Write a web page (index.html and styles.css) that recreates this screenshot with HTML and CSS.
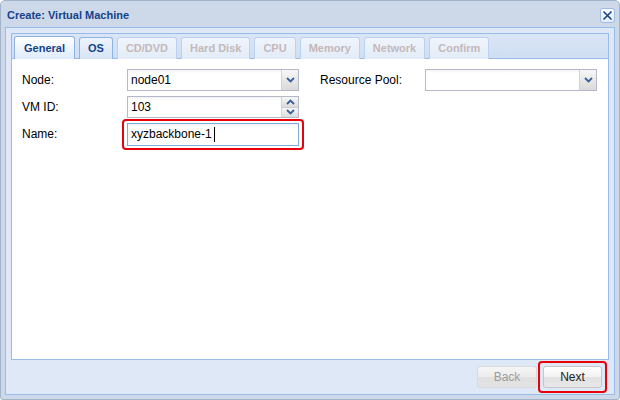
FILE: index.html
```html
<!DOCTYPE html>
<html>
<head>
<meta charset="utf-8">
<link rel="stylesheet" href="styles.css">
</head>
<body>
<div class="window">
  <div class="header">
    <span class="title">Create: Virtual Machine</span>
    <span class="close"><svg width="11" height="11" viewBox="0 0 11 11"><path d="M1.5 1.5 L9.5 9.5 M9.5 1.5 L1.5 9.5" stroke="#15428b" stroke-width="1.6" fill="none"/></svg></span>
  </div>
  <div class="frame">
    <div class="tabpanel">
      <div class="tabstrip">
        <span class="tab active">General</span>
        <span class="tab">OS</span>
        <span class="tab disabled">CD/DVD</span>
        <span class="tab disabled">Hard Disk</span>
        <span class="tab disabled">CPU</span>
        <span class="tab disabled">Memory</span>
        <span class="tab disabled">Network</span>
        <span class="tab disabled">Confirm</span>
      </div>
      <div class="tabbody">
        <div class="column">
          <div class="row">
            <span class="label">Node:</span>
            <div class="field">
              <span class="text">node01</span>
              <span class="trigger"><svg width="9" height="6" viewBox="0 0 9 6"><path d="M1 1 L4.5 4.5 L8 1" stroke="#3a5f9a" stroke-width="1.8" fill="none"/></svg></span>
            </div>
          </div>
          <div class="row">
            <span class="label">VM ID:</span>
            <div class="field">
              <span class="text">103</span>
              <span class="spinner">
                <span class="spin up"><svg width="9" height="6" viewBox="0 0 9 6"><path d="M1 5 L4.5 1.5 L8 5" stroke="#3a5f9a" stroke-width="1.8" fill="none"/></svg></span>
                <span class="spin down"><svg width="9" height="6" viewBox="0 0 9 6"><path d="M1 1 L4.5 4.5 L8 1" stroke="#3a5f9a" stroke-width="1.8" fill="none"/></svg></span>
              </span>
            </div>
          </div>
          <div class="row">
            <span class="label">Name:</span>
            <div class="field focus highlight">
              <span class="text">xyzbackbone-1<span class="caret"></span></span>
            </div>
          </div>
        </div>
        <div class="column">
          <div class="row">
            <span class="label">Resource Pool:</span>
            <div class="field">
              <span class="text"></span>
              <span class="trigger"><svg width="9" height="6" viewBox="0 0 9 6"><path d="M1 1 L4.5 4.5 L8 1" stroke="#3a5f9a" stroke-width="1.8" fill="none"/></svg></span>
            </div>
          </div>
        </div>
      </div>
    </div>
    <div class="footer">
      <span class="btn disabled">Back</span>
      <span class="btn highlight-btn">Next</span>
    </div>
  </div>
</div>
</body>
</html>
```

FILE: styles.css
```css
* { box-sizing: border-box; }
html, body { margin: 0; padding: 0; }
body {
  width: 620px;
  height: 400px;
  background: #ffffff;
  font-family: "Liberation Sans", Arial, sans-serif;
  overflow: hidden;
}
.window {
  width: 620px;
  height: 400px;
  background: #cdd9e8;
  border: 1px solid #a2b4ca;
  border-radius: 5px 5px 3px 3px;
  padding: 0 4px 4px 4px;
  display: flex;
  flex-direction: column;
}
.header {
  height: 26px;
  display: flex;
  align-items: center;
  justify-content: space-between;
  padding: 0 0 0 2px;
}
.title {
  font-weight: bold;
  font-size: 11px;
  color: #15428b;
  margin-top: 1px;
}
.close {
  width: 15px;
  height: 15px;
  border: 1px solid #99bbe8;
  border-radius: 3px;
  background: linear-gradient(#ffffff, #e3ecf8);
  display: flex;
  align-items: center;
  justify-content: center;
  margin-top: 2px;
}
.frame {
  flex: 1;
  background: #dfe8f6;
  border: 1px solid #99bbe8;
  padding: 5px 5px 0 5px;
  display: flex;
  flex-direction: column;
}
.tabpanel {
  height: 327px;
  border: 1px solid #99bbe8;
  display: flex;
  flex-direction: column;
}
.tabstrip {
  height: 25px;
  background: linear-gradient(#dae6f6, #cfdef3);
  border-bottom: 1px solid #99bbe8;
  padding: 2px 0 0 2px;
  display: flex;
  gap: 4px;
  align-items: flex-end;
}
.tab {
  height: 22px;
  margin-bottom: -1px;
  border: 1px solid #8db2e3;
  border-bottom: none;
  border-radius: 3px 3px 0 0;
  background: linear-gradient(#eef4fc, #d7e4f5);
  font-size: 11px;
  font-weight: bold;
  color: #15428b;
  padding: 4px 8px 0 8px;
}
.tab.active {
  background: linear-gradient(#ffffff, #deecfd);
  height: 23px;
  padding: 5px 9px 0 9px;
}
.tab.disabled {
  color: #c4b8ba;
  border-color: #bcd1ee;
  background: linear-gradient(#f0f5fc, #e2ebf7);
}
.tabbody {
  flex: 1;
  background: #ffffff;
  padding: 10px 10px;
  display: flex;
  gap: 21px;
}
.column {
  display: flex;
  flex-direction: column;
  gap: 5px;
}
.row {
  display: flex;
  align-items: center;
  height: 22px;
}
.label {
  width: 105px;
  font-size: 12px;
  color: #000;
}
.field {
  width: 172px;
  height: 22px;
  border: 1px solid #b5b8c8;
  background: linear-gradient(#f2f2f2 0, #ffffff 3px);
  display: flex;
  align-items: center;
  position: relative;
}
.field.focus {
  border-color: #7eadd9;
  height: 23px;
}
.text {
  flex: 1;
  font-size: 12px;
  padding-left: 3px;
  color: #000;
  display: flex;
  align-items: center;
}
.caret {
  display: inline-block;
  width: 1px;
  height: 15px;
  background: #000;
  margin-left: 2px;
}
.trigger {
  width: 17px;
  height: 20px;
  border-left: 1px solid #cfd3de;
  background: linear-gradient(#f7f7f7, #d9d9d9);
  display: flex;
  align-items: center;
  justify-content: center;
}
.spinner {
  width: 17px;
  height: 20px;
  display: flex;
  flex-direction: column;
  border-left: 1px solid #cfd3de;
}
.spin {
  flex: 1;
  background: linear-gradient(#f7f7f7, #dcdcdc);
  display: flex;
  align-items: center;
  justify-content: center;
}
.spin.up { border-bottom: 1px solid #c8ccd6; }
.highlight::after {
  content: "";
  position: absolute;
  left: -6px;
  right: -6px;
  top: -5px;
  bottom: -5px;
  border: 2px solid #e8000b;
  border-radius: 4px;
}
.footer {
  flex: 1;
  display: flex;
  justify-content: flex-end;
  align-items: flex-start;
  gap: 6px;
  padding: 6px 7px 0 0;
}
.btn {
  height: 22px;
  border: 1px solid #c4c6cc;
  border-radius: 3px;
  background: linear-gradient(#ffffff 0%, #f2f2f2 50%, #e2e2e2 51%, #e8e8e8 100%);
  font-size: 12px;
  color: #222;
  display: flex;
  align-items: center;
  justify-content: center;
  width: 59px;
  position: relative;
}
.btn.disabled {
  width: 60px;
  color: #9d9d9d;
  border-color: #d8dadd;
  background: linear-gradient(#f5f5f5 0%, #ececec 50%, #e0e0e0 51%, #e4e4e4 100%);
}
.highlight-btn::after {
  content: "";
  position: absolute;
  left: -6px;
  right: -6px;
  top: -6px;
  bottom: -6px;
  border: 2px solid #e8000b;
  border-radius: 4px;
}
```
